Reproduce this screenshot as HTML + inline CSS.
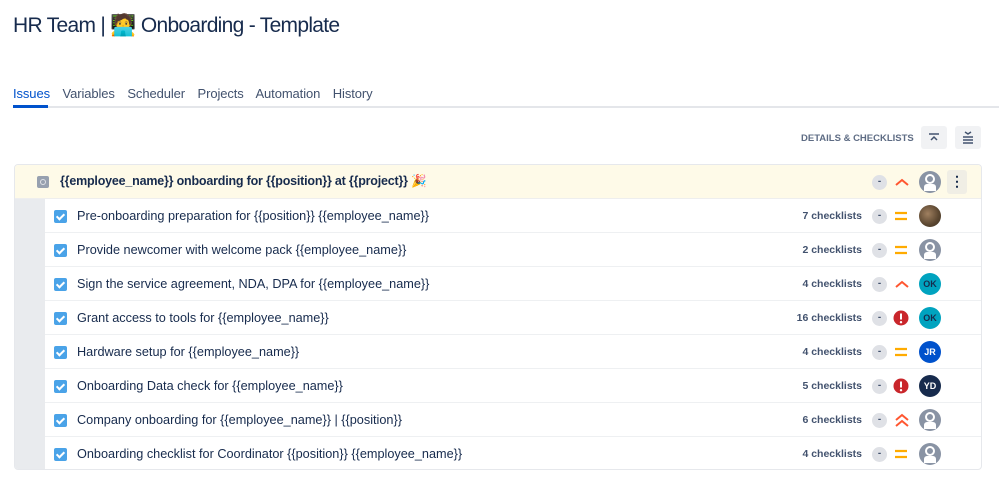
<!DOCTYPE html>
<html><head><meta charset="utf-8"><style>
*{box-sizing:border-box;margin:0;padding:0}
body{width:999px;height:495px;background:#fff;font-family:"Liberation Sans","Noto Sans CJK JP",sans-serif;color:#172b4d;position:relative;overflow:hidden}
.title{position:absolute;left:13px;top:14px;font-size:21px;letter-spacing:-0.7px}
.tabs{position:absolute;left:13px;top:86px;font-size:13px;color:#42526e;letter-spacing:-0.1px}
.tabs span{margin-right:9px}
.tabs .act{color:#0052cc}
.tabline{position:absolute;left:13px;top:106px;width:986px;height:2px;background:#e4e6ea}
.tabul{position:absolute;left:13px;top:105px;width:35px;height:3px;background:#0052cc}
.dc{position:absolute;left:801px;top:133px;font-size:9.5px;font-weight:bold;color:#5e6c84;letter-spacing:0}
.btn{position:absolute;top:126px;width:26px;height:23px;background:#f1f2f4;border-radius:3px}
.box{position:absolute;left:14px;top:164px;width:968px;height:306px;border:1px solid #e6e8ec;border-radius:4px;overflow:hidden}
.hdr{position:absolute;left:0;top:0;width:100%;height:34px;background:#fefae8;border-bottom:1px solid #eee}
.band{position:absolute;left:0;top:34px;width:30px;height:272px;background:#e9ebee}
.row{position:absolute;left:30px;width:938px;height:34px;border-bottom:1px solid #eef0f2;font-size:12.7px}
.row .t{position:absolute;left:32px;top:10px}
.cb{position:absolute;left:9px;top:11px;width:13px;height:13px;background:#4aa3e8;border-radius:2px}
.cb:after{content:"";position:absolute;left:4px;top:1.5px;width:3px;height:6px;border:solid #fff;border-width:0 2px 2px 0;transform:rotate(45deg)}
.cl{position:absolute;right:121px;top:11px;font-size:10.5px;font-weight:bold;color:#42526e;text-align:right}
.dash{position:absolute;width:15px;height:15px;border-radius:50%;background:#dfe1e6;font-size:10px;text-align:center;line-height:14px;color:#42526e;font-weight:bold}
.av{position:absolute;width:22px;height:22px;border-radius:50%;color:#fff;font-size:9px;font-weight:bold;text-align:center;line-height:22px}
.pri{position:absolute}
</style></head><body>
<div class="title">HR Team | 🧑‍💻 Onboarding - Template</div>
<div class="tabs"><span class="act">Issues</span> <span>Variables</span> <span>Scheduler</span> <span>Projects</span> <span>Automation</span> <span>History</span></div>
<div class="tabline"></div><div class="tabul"></div>
<div class="dc">DETAILS &amp; CHECKLISTS</div>
<div class="btn" style="left:921px"><svg width="26" height="23"><path d="M8 8h10M10 14l3-3 3 3" stroke="#42526e" stroke-width="1.5" fill="none"/></svg></div>
<div class="btn" style="left:955px"><svg width="26" height="23"><path d="M8 11h10M8 14h10M8 17h10M10 6l3 2 3-2" stroke="#42526e" stroke-width="1.5" fill="none"/></svg></div>
<div class="box">
<div class="hdr">
<div style="position:absolute;left:22px;top:11px;width:12px;height:12px;background:#97a0af;border-radius:2px"><div style="position:absolute;left:3px;top:3px;width:6px;height:6px;border:1.5px solid #dfe1e6;border-radius:50%"></div></div>
<div style="position:absolute;left:45px;top:9px;font-size:12.5px;font-weight:bold;letter-spacing:-0.2px">{{employee_name}} onboarding for {{position}} at {{project}} 🎉</div>
<div class="dash" style="left:857px;top:10px">-</div>
<svg class="pri" style="left:879px;top:10px" width="16" height="14"><path d="M2 10l6-5 6 5" stroke="#ff5630" stroke-width="2" fill="none"/></svg>
<svg style="position:absolute;left:903px;top:5px" width="24" height="24"><circle cx="12" cy="12" r="11" fill="#8993a4"/><circle cx="12" cy="9" r="4" fill="none" stroke="#fff" stroke-width="2"/><path d="M6 21v-4a3 3 0 0 1 3-3h6a3 3 0 0 1 3 3v4z" fill="#fff"/></svg>
<div style="position:absolute;left:932px;top:5px;width:20px;height:24px;background:#f0eee5;border-radius:3px;text-align:center;font-weight:bold;line-height:22px;font-size:14px">⋮</div>
</div>
<div class="band"></div>
<div id="rows"></div>
</div>
<script>
var d=[["Pre-onboarding preparation for {{position}} {{employee_name}}","7","eq","photo"],
["Provide newcomer with welcome pack {{employee_name}}","2","eq","none"],
["Sign the service agreement, NDA, DPA for {{employee_name}}","4","up","OK"],
["Grant access to tools for {{employee_name}}","16","ex","OK"],
["Hardware setup for {{employee_name}}","4","eq","JR"],
["Onboarding Data check for {{employee_name}}","5","ex","YD"],
["Company onboarding for {{employee_name}} | {{position}}","6","up2","none"],
["Onboarding checklist for Coordinator {{position}} {{employee_name}}","4","eq","none"]];
var h="";
d.forEach(function(r,i){
var p="";
if(r[2]=="eq")p='<svg class="pri" style="left:849px;top:10px" width="14" height="14"><path d="M1 4h12M1 10h12" stroke="#ffab00" stroke-width="2.2"/></svg>';
if(r[2]=="up")p='<svg class="pri" style="left:849px;top:10px" width="16" height="14"><path d="M2 10l6-5 6 5" stroke="#ff5630" stroke-width="2" fill="none"/></svg>';
if(r[2]=="up2")p='<svg class="pri" style="left:849px;top:9px" width="16" height="16"><path d="M2 8l6-5 6 5M2 14l6-5 6 5" stroke="#ff5630" stroke-width="2" fill="none"/></svg>';
if(r[2]=="ex")p='<svg class="pri" style="left:848px;top:9px" width="16" height="16"><circle cx="8" cy="8" r="7.5" fill="#c9262b"/><path d="M8 3.5v6" stroke="#fff" stroke-width="2"/><circle cx="8" cy="12.2" r="1.2" fill="#fff"/></svg>';
var a;
if(r[3]=="none")a='<svg style="position:absolute;left:873px;top:5px" width="24" height="24"><circle cx="12" cy="12" r="11" fill="#8993a4"/><circle cx="12" cy="9" r="4" fill="none" stroke="#fff" stroke-width="2"/><path d="M6 21v-4a3 3 0 0 1 3-3h6a3 3 0 0 1 3 3v4z" fill="#fff"/></svg>';
else if(r[3]=="photo")a='<div class="av" style="left:874px;top:6px;background:radial-gradient(circle at 40% 40%,#a08060,#5a4630 60%,#3c3020)"></div>';
else{var c={OK:"#00a3bf",JR:"#0052cc",YD:"#172b4d"}[r[3]];a='<div class="av" style="left:874px;top:6px;background:'+c+';color:'+(r[3]=="OK"?"#172b4d":"#fff")+'">'+r[3]+'</div>';}
h+='<div class="row" style="top:'+(34+i*34)+'px"><div class="cb"></div><div class="t">'+r[0]+'</div><div class="cl">'+r[1]+' checklists</div><div class="dash" style="left:827px;top:10px">-</div>'+p+a+'</div>';
});
document.getElementById("rows").innerHTML=h;
</script>
</body></html>
